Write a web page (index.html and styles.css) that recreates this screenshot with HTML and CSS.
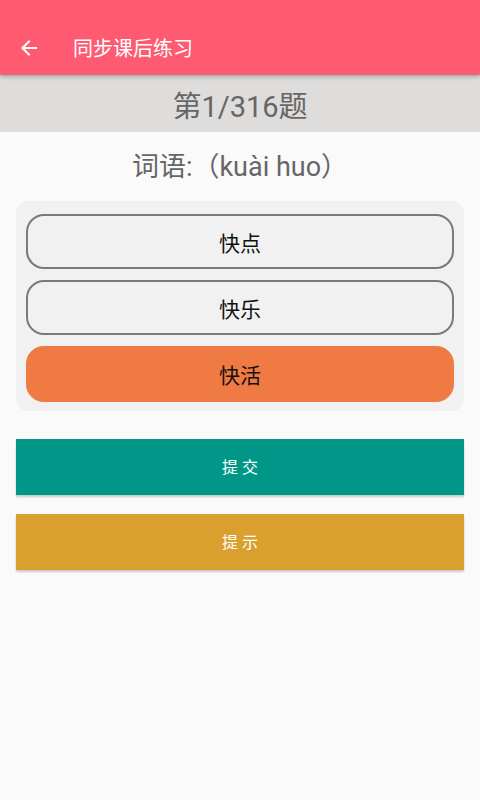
FILE: index.html
```html
<!DOCTYPE html>
<html lang="zh">
<head>
<meta charset="utf-8">
<link rel="stylesheet" href="styles.css">
</head>
<body>
<header class="appbar">
  <svg class="back" width="24" height="24" viewBox="0 0 24 24"><path d="M20 11H7.83l5.59-5.59L12 4l-8 8 8 8 1.41-1.41L7.83 13H20v-2z" fill="#fff"/></svg>
  <span class="title">同步课后练习</span>
</header>
<div class="progress">第1/316题</div>
<div class="word">词语:（kuài huo）</div>
<div class="options">
  <div class="opt">快点</div>
  <div class="opt">快乐</div>
  <div class="opt selected">快活</div>
</div>
<div class="btn submit">提 交</div>
<div class="btn hint">提 示</div>
</body>
</html>
```
FILE: styles.css
```css
html, body { margin: 0; padding: 0; }
body {
  width: 480px; height: 800px; background: #fafafa;
  font-family: Roboto, "Noto Sans CJK SC", sans-serif;
  overflow: hidden;
}
.appbar {
  height: 75px; background: #fe5b73; display: flex; align-items: flex-end;
  box-shadow: 0 2px 4px rgba(0,0,0,0.25); position: relative; z-index: 1;
  box-sizing: border-box; padding-bottom: 13px;
}
.back { margin-left: 17px; margin-bottom: 2px; }
.title { color: #fff; font-size: 20px; margin-left: 32px; line-height: 26px; }
.progress {
  height: 57px; background: #dedddb; color: #666; font-size: 29px;
  display: flex; align-items: center; justify-content: center;
}
.word {
  height: 64px; display: flex; align-items: center; justify-content: center;
  color: #666; font-size: 27px; padding-bottom: 5px;
}
.options {
  margin: 0 16px; background: #f1f1f1; border-radius: 12px;
  padding: 13px 10px 9px; display: flex; flex-direction: column; gap: 11px;
}
.opt {
  height: 55px; box-sizing: border-box; border: 2px solid #7a7a7a; border-radius: 18px;
  background: #f1f1f1; display: flex; align-items: center; justify-content: center;
  font-size: 21px; color: #111;
}
.opt.selected { background: #ef7a43; border-color: #ef7a43; height: 56px; }
.btn {
  margin: 28px 16px 0; height: 56px; display: flex; align-items: center; justify-content: center;
  color: #fff; font-size: 16px; padding-bottom: 2px; box-sizing: border-box;
  box-shadow: 0 2px 2px rgba(0,0,0,0.2);
}
.submit { background: #009688; }
.hint { background: #d9a02e; margin-top: 19px; }
```
